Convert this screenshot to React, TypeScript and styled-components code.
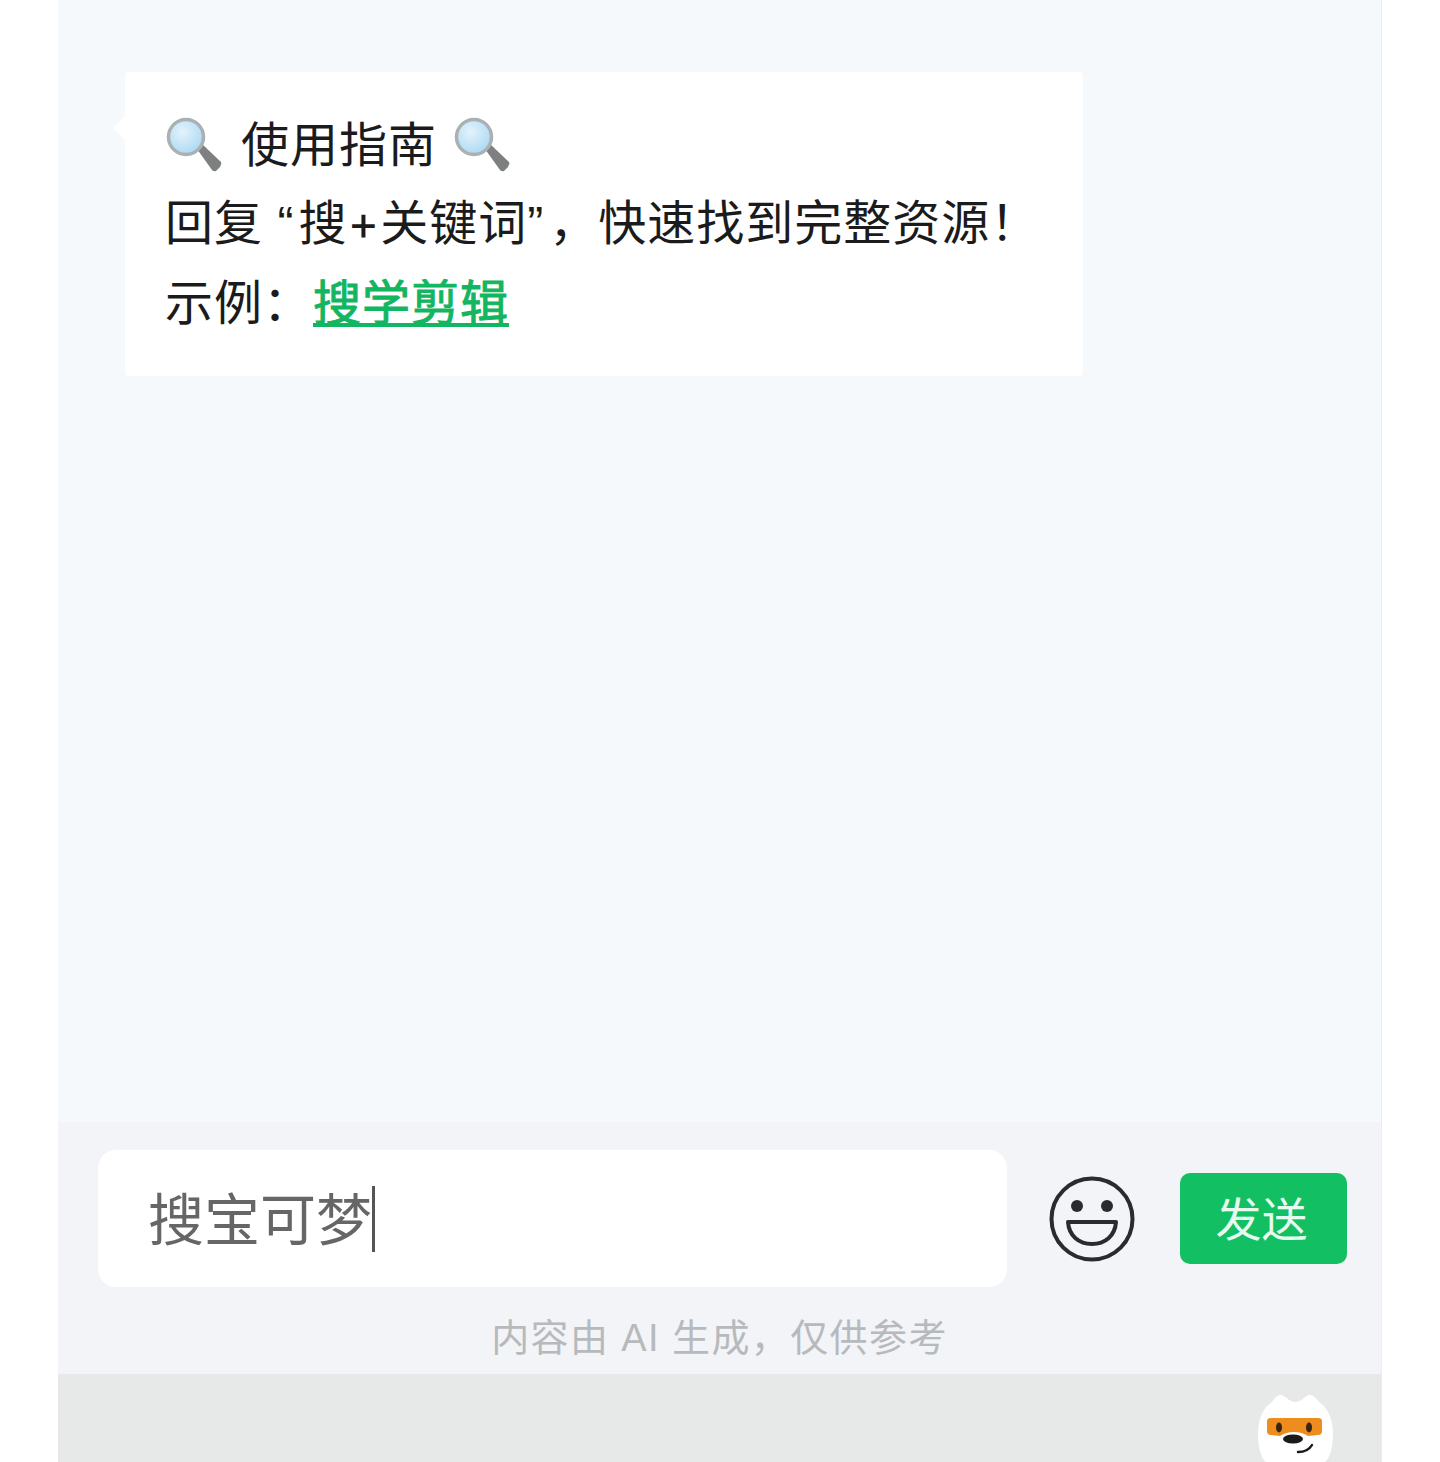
import React from 'react'
import styled, { createGlobalStyle } from 'styled-components'

const GlobalStyle = createGlobalStyle`
  html, body {
    margin: 0;
    padding: 0;
    background: #fff;
  }
  body {
    font-family: "Liberation Sans", "Noto Sans CJK SC", sans-serif;
  }
`

function Magnifier() {
  return (
    <LensIcon viewBox="0 0 56 56">
      <defs>
        <radialGradient id="glass" cx="40%" cy="35%" r="70%">
          <stop offset="0%" stopColor="#e3f3fc" />
          <stop offset="100%" stopColor="#a9d8f3" />
        </radialGradient>
      </defs>
      <path d="M31 32 L36 27 L55 45 Q56 47 54 50 L50 54 Q48 55 46 53 Z" fill="#7d7f80" />
      <circle cx="20" cy="20" r="17.5" fill="url(#glass)" stroke="#a9b1b4" strokeWidth="3.5" />
    </LensIcon>
  )
}

function Smiley() {
  return (
    <svg width="86" height="86" viewBox="0 0 86 86" fill="none">
      <circle cx="43" cy="43" r="40.5" stroke="#2b2b2d" strokeWidth="4" />
      <circle cx="28" cy="30" r="6" fill="#2b2b2d" />
      <circle cx="58" cy="30" r="6" fill="#2b2b2d" />
      <path d="M19 46 H67 C66 60 56 68 43 68 C30 68 20 60 19 46 Z" stroke="#2b2b2d" strokeWidth="4" strokeLinejoin="round" />
    </svg>
  )
}

function Mascot() {
  return (
    <svg width="76" height="68" viewBox="0 0 76 68">
      <path d="M0 40 C0 24 6 13 14 8 C17 3 21 0 24 1 C29 4 33 8 37 8 C42 8 46 4 50 1 C54 0 58 4 61 8 C69 13 75 24 75 40 C75 56 70 68 66 68 H9 C5 68 0 56 0 40 Z" fill="#fff" />
      <path d="M9 27 Q9 24 13 24 H60 Q64 24 64 27 V37 Q64 41 60 41 L50 42 Q44 38 36 38 Q28 38 22 42 L13 41 Q9 41 9 37 Z" fill="#ee8d1d" />
      <ellipse cx="21" cy="33.5" rx="3" ry="5" fill="#3a2410" />
      <ellipse cx="51" cy="33.5" rx="3" ry="5" fill="#3a2410" />
      <ellipse cx="35" cy="45" rx="10" ry="4.5" fill="#1c1a18" />
      <path d="M40 58 Q50 58 54 51" stroke="#1c1a18" strokeWidth="2.5" fill="none" strokeLinecap="round" />
    </svg>
  )
}

export default function App() {
  return (
    <Screen>
      <GlobalStyle />
      <ChatArea>
        <Bubble>
          <TitleLine>
            <Magnifier />
            <TitleText>使用指南</TitleText>
            <Magnifier />
          </TitleLine>
          <TextLine>
            回复 <Quote $gap={5}>“</Quote>搜+关键词<Quote $gap={6}>”</Quote>，快速找到完整资源！
          </TextLine>
          <TextLine>
            示例：<KeywordLink>搜学剪辑</KeywordLink>
          </TextLine>
        </Bubble>
      </ChatArea>
      <Composer>
        <InputRow>
          <InputBox>
            <InputText>搜宝可梦</InputText>
            <Caret />
          </InputBox>
          <Smiley />
          <SendButton>发送</SendButton>
        </InputRow>
        <Disclaimer>内容由 AI 生成，仅供参考</Disclaimer>
      </Composer>
      <BottomBar>
        <Mascot />
      </BottomBar>
    </Screen>
  )
}

const Screen = styled.div`
  width: 1323px;
  height: 1462px;
  margin-left: 58px;
  display: flex;
  flex-direction: column;
  overflow: hidden;
  border-right: 1px solid #e6eef6;
  box-sizing: content-box;
`

const ChatArea = styled.main`
  flex: 1;
  background: #f6f9fb;
  padding: 72px 0 0 67px;
`

const Bubble = styled.div`
  position: relative;
  width: 958px;
  height: 304px;
  box-sizing: border-box;
  padding: 31px 0 0 40px;
  background: #fff;
  border-radius: 4px;
  color: #1b1b1b;
  font-family: Inter, "Noto Sans CJK SC", sans-serif;
  font-size: 48px;
  letter-spacing: 1px;

  &::before {
    content: '';
    position: absolute;
    left: -12px;
    top: 44px;
    border-style: solid;
    border-width: 12px 12px 12px 0;
    border-color: transparent #fff transparent transparent;
  }
`

const TitleLine = styled.div`
  height: 80px;
  display: flex;
  align-items: center;
  padding-left: 1px;
`

const LensIcon = styled.svg`
  width: 56px;
  height: 56px;
  flex: none;
  margin-top: 3px;
`

const TitleText = styled.span`
  margin: 0 17px 5px 19px;
`

const TextLine = styled.div`
  height: 80px;
  line-height: 80px;
  white-space: nowrap;
`

const Quote = styled.span<{ $gap: number }>`
  font-family: "Liberation Sans", sans-serif;
  letter-spacing: ${props => props.$gap}px;
`

const KeywordLink = styled.a`
  color: #12b661;
  -webkit-text-stroke: 1px #12b661;
  text-decoration: underline;
  text-decoration-thickness: 4px;
  text-underline-offset: 3px;
  margin-left: 1px;
`

const Composer = styled.section`
  height: 252px;
  box-sizing: border-box;
  padding: 28px 34px 0 40px;
  background: #f2f4f7;
  display: flex;
  flex-direction: column;
`

const InputRow = styled.div`
  display: flex;
  align-items: center;
  gap: 42px;
`

const InputBox = styled.div`
  width: 909px;
  height: 137px;
  box-sizing: border-box;
  padding-left: 50px;
  display: flex;
  align-items: center;
  background: #fff;
  border-radius: 18px;
`

const InputText = styled.span`
  font-size: 56px;
  color: #666;
  margin-bottom: 6px;
`

const Caret = styled.span`
  width: 3px;
  height: 66px;
  background: #555;
`

const SendButton = styled.button`
  width: 167px;
  height: 91px;
  margin-left: 3px;
  padding: 0 4px 6px 0;
  border: none;
  border-radius: 10px;
  background: #12bf63;
  color: #e6fbef;
  font-family: inherit;
  font-size: 46px;
`

const Disclaimer = styled.div`
  margin: 28px 0 0 -6px;
  text-align: center;
  font-size: 38px;
  line-height: 46px;
  letter-spacing: 1.4px;
  color: #b7babd;
`

const BottomBar = styled.footer`
  height: 88px;
  box-sizing: border-box;
  padding: 20px 47px 0 0;
  background: #e7e8e8;
  display: flex;
  justify-content: flex-end;
  align-items: flex-start;
`
